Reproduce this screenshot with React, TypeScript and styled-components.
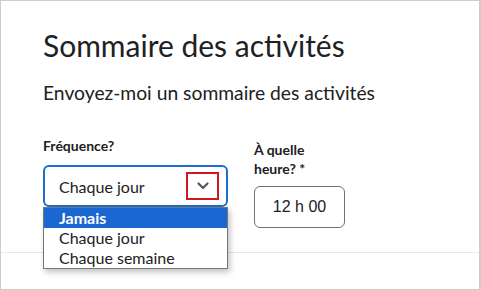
import React from 'react';
import styled, { createGlobalStyle } from 'styled-components';

const GlobalStyle = createGlobalStyle`
  body {
    margin: 0;
    background: #ffffff;
    font-family: Lato, 'Noto Sans', sans-serif;
    color: #202122;
  }
`;

const Frame = styled.div`
  position: relative;
  width: 481px;
  height: 290px;
  box-sizing: border-box;
  border: 1px solid #cdcdcd;
  border-right-width: 2px;
  overflow: hidden;
  padding: 26px 0 0 42px;
`;

const Title = styled.h1`
  margin: 0;
  font-size: 30px;
  font-weight: 400;
  line-height: 36px;
  color: #202122;
`;

const Subtitle = styled.p`
  margin: 16px 0 0;
  font-size: 19.3px;
  line-height: 28px;
  color: #202122;
`;

const Fields = styled.div`
  display: flex;
  gap: 26px;
  margin-top: 29px;
`;

const Field = styled.div<{ $width: number; $offset?: number }>`
  display: flex;
  flex-direction: column;
  width: ${(p) => p.$width}px;
  padding-top: ${(p) => p.$offset ?? 0}px;
`;

const Label = styled.label<{ $lineHeight?: number }>`
  font-size: 14px;
  font-weight: 700;
  line-height: ${(p) => p.$lineHeight ?? 20}px;
  color: #202122;
`;

const SelectWrap = styled.div`
  position: relative;
  margin-top: 9px;
`;

const SelectBox = styled.div`
  box-sizing: border-box;
  height: 42px;
  border: 2px solid #1a6fd0;
  border-radius: 6px;
  display: flex;
  align-items: center;
  justify-content: space-between;
  padding: 0 7px 0 14px;
  font-size: 16px;
`;

const ChevronBox = styled.span`
  box-sizing: border-box;
  width: 33px;
  height: 28px;
  border: 2px solid #d0161f;
  display: flex;
  align-items: center;
  justify-content: center;
  color: #565a5c;
`;

const Menu = styled.ul`
  position: absolute;
  top: 42px;
  left: 0;
  right: 0;
  margin: 0;
  padding: 0;
  list-style: none;
  background: #ffffff;
  border: 1px solid #767676;
  box-shadow: 2px 3px 6px rgba(0, 0, 0, 0.25);
  z-index: 2;
`;

const Option = styled.li<{ $selected?: boolean }>`
  height: 20px;
  line-height: 20px;
  padding-left: 15px;
  font-size: 16px;
  background: ${(p) => (p.$selected ? '#1a67d2' : 'transparent')};
  color: ${(p) => (p.$selected ? '#ffffff' : '#202122')};
  font-weight: ${(p) => (p.$selected ? 700 : 400)};
`;

const TimeInput = styled.div`
  box-sizing: border-box;
  margin-top: 8px;
  width: 91px;
  height: 42px;
  border: 1px solid #6e7477;
  border-radius: 6px;
  display: flex;
  align-items: center;
  justify-content: center;
  font-family: 'Liberation Sans', Arial, sans-serif;
  font-size: 16px;
  color: #202122;
`;

const Divider = styled.hr`
  margin: 24px 0 0 -42px;
  border: 0;
  border-top: 1px solid #e3e9f1;
`;

export default function App() {
  return (
    <>
      <GlobalStyle />
      <Frame>
        <Title>Sommaire des activités</Title>
        <Subtitle>Envoyez-moi un sommaire des activités</Subtitle>
        <Fields>
          <Field $width={185}>
            <Label>Fréquence?</Label>
            <SelectWrap>
              <SelectBox>
                <span>Chaque jour</span>
                <ChevronBox>
                  <svg width="12" height="8" viewBox="0 0 12 8" fill="none">
                    <path d="M1.5 1.5 6 6l4.5-4.5" stroke="currentColor" strokeWidth="2.2" strokeLinecap="round" strokeLinejoin="round" />
                  </svg>
                </ChevronBox>
              </SelectBox>
              <Menu>
                <Option $selected>Jamais</Option>
                <Option>Chaque jour</Option>
                <Option>Chaque semaine</Option>
              </Menu>
            </SelectWrap>
          </Field>
          <Field $width={80} $offset={4}>
            <Label $lineHeight={19}>À quelle heure? *</Label>
            <TimeInput>12 h 00</TimeInput>
          </Field>
        </Fields>
        <Divider />
      </Frame>
    </>
  );
}
